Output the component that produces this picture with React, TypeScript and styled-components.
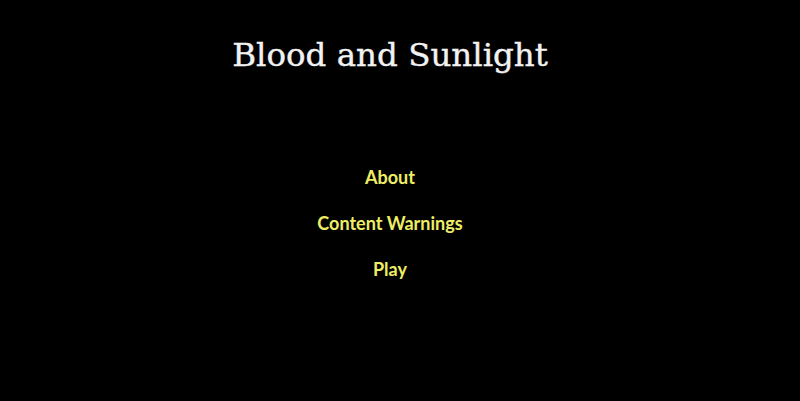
import React from "react";
import styled, { createGlobalStyle } from "styled-components";

const Global = createGlobalStyle`
  html, body { margin: 0; padding: 0; background: #000; }
  body { width: 800px; height: 401px; overflow: hidden; }
`;

const Page = styled.div`
  width: 780px;
  height: 401px;
  background: #000;
  display: flex;
  flex-direction: column;
  align-items: center;
`;

const Title = styled.h1`
  margin: 35px 0 0;
  font-family: "DejaVu Serif", "Liberation Serif", serif;
  font-weight: normal;
  font-size: 32.5px;
  line-height: 40px;
  color: #f2f2f2;
  -webkit-text-stroke: 0.4px #f2f2f2;
`;

const Menu = styled.nav`
  margin-top: 91px;
  display: flex;
  flex-direction: column;
  align-items: center;
  gap: 24px;
`;

const MenuLink = styled.a`
  font-family: Lato, "Liberation Sans", sans-serif;
  font-weight: bold;
  font-size: 18px;
  line-height: 22px;
  color: #eeee66;
  text-decoration: none;
  cursor: pointer;
`;

export default function App() {
  return (
    <>
      <Global />
      <Page>
        <Title>Blood and Sunlight</Title>
        <Menu>
          <MenuLink>About</MenuLink>
          <MenuLink>Content Warnings</MenuLink>
          <MenuLink>Play</MenuLink>
        </Menu>
      </Page>
    </>
  );
}
